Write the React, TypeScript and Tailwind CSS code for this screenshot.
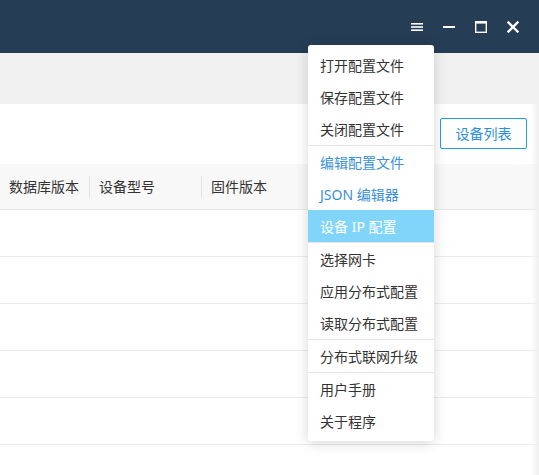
import React from 'react';

type Item = { label: string; tone?: 'blue' | 'active' };

const groups: Item[][] = [
  [{ label: '打开配置文件' }, { label: '保存配置文件' }, { label: '关闭配置文件' }],
  [{ label: '编辑配置文件', tone: 'blue' }, { label: 'JSON 编辑器', tone: 'blue' }, { label: '设备 IP 配置', tone: 'active' }],
  [{ label: '选择网卡' }, { label: '应用分布式配置' }, { label: '读取分布式配置' }],
  [{ label: '分布式联网升级' }],
  [{ label: '用户手册' }, { label: '关于程序' }],
];

const columns = [
  { label: '数据库版本', w: 'w-[90px]' },
  { label: '设备型号', w: 'w-[112px]' },
  { label: '固件版本', w: 'w-[120px]' },
];

function Menu() {
  return (
    <div className="absolute left-[308px] top-[45px] w-[126px] rounded-[3px] bg-white py-[4px] shadow-[0_2px_14px_rgba(0,0,0,0.16)]">
      {groups.map((g, gi) => (
        <div key={gi} className={gi > 0 ? 'border-t border-[#e4e4e4]' : ''}>
          {g.map((it) => (
            <div
              key={it.label}
              className={
                'flex h-[32px] items-center pl-[12px] text-[14px] ' +
                (it.tone === 'active'
                  ? 'bg-[#81d4fa] text-white'
                  : it.tone === 'blue'
                  ? 'text-[#3b91d8]'
                  : 'text-[#333]')
              }
            >
              {it.label}
            </div>
          ))}
        </div>
      ))}
    </div>
  );
}

export default function App() {
  return (
    <div
      className="relative h-[475px] w-[539px] overflow-hidden bg-white"
      style={{ fontFamily: '"Noto Sans", "Noto Sans CJK SC", sans-serif' }}
    >
      <header className="flex h-[53px] items-center justify-end gap-[20px] bg-[#253d55] pr-[20px]">
        <svg width="12" height="12" viewBox="0 0 12 12" className="text-white">
          <rect x="0" y="2" width="12" height="1.6" fill="currentColor" />
          <rect x="0" y="5.2" width="12" height="1.6" fill="currentColor" />
          <rect x="0" y="8.4" width="12" height="1.6" fill="currentColor" />
        </svg>
        <svg width="12" height="12" viewBox="0 0 12 12" className="text-white">
          <rect x="0" y="5" width="12" height="2" fill="currentColor" />
        </svg>
        <svg width="12" height="12" viewBox="0 0 12 12" className="text-white">
          <rect x="0.7" y="0.7" width="10.6" height="10.6" fill="none" stroke="currentColor" strokeWidth="1.4" />
          <rect x="0" y="0" width="12" height="2.6" fill="currentColor" />
        </svg>
        <svg width="12" height="12" viewBox="0 0 12 12" className="text-white">
          <path d="M1.5 1.5 L10.5 10.5 M10.5 1.5 L1.5 10.5" stroke="currentColor" strokeWidth="2.4" strokeLinecap="square" />
        </svg>
      </header>

      <div className="h-[51px] bg-[#f1f1f1]" />

      <div className="flex h-[60px] items-start justify-end pr-[12px] pt-[14px]">
        <button className="h-[31px] w-[87px] rounded-[2px] border border-[#1f9de6] text-[14px] text-[#2b8fdc]">
          设备列表
        </button>
      </div>

      <div className="flex h-[46px] items-center border-b border-[#e8e8e8] bg-[#f8f8f8] text-[14px] text-[#333]">
        {columns.map((c, i) => (
          <div key={c.label} className={'flex h-[22px] items-center pl-[9px] ' + c.w + (i < 2 ? ' border-r border-[#e2e2e2]' : '')}>
            {c.label}
          </div>
        ))}
      </div>

      {[0, 1, 2, 3, 4].map((r) => (
        <div key={r} className="h-[47px] border-b border-[#ebebeb]" />
      ))}

      <div className="pointer-events-none absolute right-0 top-[104px] bottom-0 w-[8px] bg-gradient-to-r from-transparent to-[#efefef]" />

      <Menu />
    </div>
  );
}
